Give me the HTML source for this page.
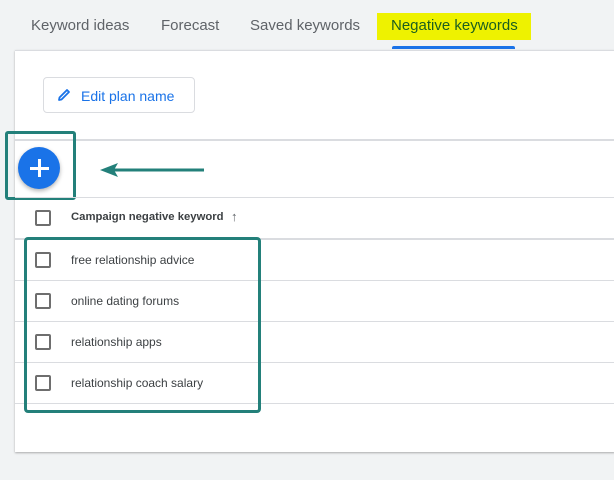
<!DOCTYPE html>
<html><head><style>
*{margin:0;padding:0;box-sizing:border-box}
body{width:614px;height:480px;background:#f1f3f4;position:relative;overflow:hidden;font-family:"Liberation Sans",Arial,sans-serif}
.a{position:absolute}
.tab{position:absolute;top:17px;font-size:15px;color:#5f6368;white-space:nowrap}
.panel{left:15px;top:50px;width:600px;height:402px;background:#fff;border-top:1px solid #dadce0;box-shadow:0 1px 2px rgba(0,0,0,.3)}
.line{left:15px;width:600px;height:1px;background:#dadce0}
.cb{position:absolute;left:35px;width:16px;height:16px;border:2px solid #6e6e6e;border-radius:2px}
.t{position:absolute;left:71px;font-size:12px;color:#3c4043;white-space:nowrap}
</style></head><body>
<div class="a" style="left:377px;top:13px;width:154px;height:27px;background:#eef200"></div>
<div class="tab" style="left:31px">Keyword ideas</div>
<div class="tab" style="left:161px">Forecast</div>
<div class="tab" style="left:250px">Saved keywords</div>
<div class="tab" style="left:391px;color:#1b5e20">Negative keywords</div>
<div class="a" style="left:392px;top:46px;width:123px;height:3px;background:#1a73e8;border-radius:2px 2px 0 0"></div>
<div class="a panel"></div>
<div class="a" style="left:43px;top:77px;width:152px;height:36px;border:1px solid #dadce0;border-radius:4px;color:#1a73e8;font-size:14px;padding:10px 0 0 37px;white-space:nowrap">Edit plan name</div>
<svg class="a" style="left:56px;top:87px" width="16" height="16" viewBox="0 0 16 16"><path d="M3 13 L3.5 10.5 L11 3 L13 5 L5.5 12.5 Z" fill="none" stroke="#1a73e8" stroke-width="1.8" stroke-linejoin="round"/></svg>
<div class="a line" style="top:139px;height:2px"></div>
<div class="a" style="left:18px;top:147px;width:42px;height:42px;border-radius:50%;background:#1a73e8;box-shadow:0 2px 4px rgba(0,0,0,.3)"></div>
<div class="a" style="left:38px;top:159px;width:3px;height:18px;background:#fff"></div>
<div class="a" style="left:30px;top:167px;width:19px;height:3px;background:#fff"></div>
<div class="a" style="left:5px;top:131px;width:71px;height:69px;border:3px solid #23807a;border-radius:3px"></div>
<svg class="a" style="left:84px;top:158px" width="124" height="24"><path d="M120 12 L30 12" stroke="#23807a" stroke-width="3"/><path d="M16 12 L34 5 L30 12 L34 19 Z" fill="#23807a"/></svg>
<div class="a line" style="top:197px"></div>
<div class="cb" style="top:210px"></div>
<div class="t" style="top:211px;font-weight:bold;font-size:11.3px">Campaign negative keyword</div>
<div class="a" style="left:231px;top:209px;font-size:13px;color:#5f6368">↑</div>
<div class="a line" style="top:238px;height:2px"></div>
<div class="cb" style="top:252px"></div><div class="t" style="top:253px">free relationship advice</div>
<div class="a line" style="top:280px"></div>
<div class="cb" style="top:293px"></div><div class="t" style="top:294px">online dating forums</div>
<div class="a line" style="top:321px"></div>
<div class="cb" style="top:334px"></div><div class="t" style="top:335px">relationship apps</div>
<div class="a line" style="top:362px"></div>
<div class="cb" style="top:375px"></div><div class="t" style="top:376px">relationship coach salary</div>
<div class="a line" style="top:403px"></div>
<div class="a" style="left:24px;top:237px;width:237px;height:176px;border:3px solid #23807a;border-radius:4px"></div>
</body></html>
